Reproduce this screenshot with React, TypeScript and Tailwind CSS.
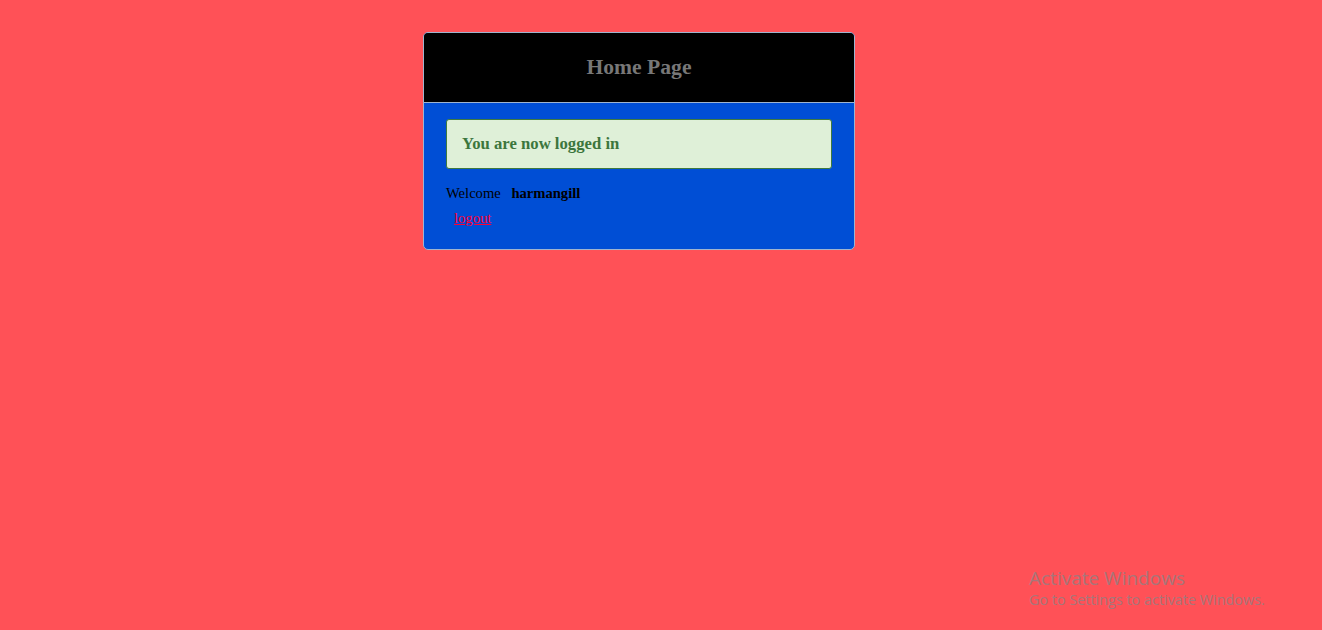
import React from 'react';

const App = () => {
    return (
        <div className="relative min-h-[630px] w-full bg-[#ff5157] font-['Liberation_Serif',serif]">
            <div className="pt-8 pl-[423px]">
                <div className="w-[432px] rounded-[5px] border border-[#9fb4cf] overflow-hidden bg-[#004ed5]">
                    <div className="h-[70px] bg-black border-b border-[#9fb4cf] flex items-center justify-center">
                        <h2 className="text-[21.6px] font-bold text-[#777777] leading-none">Home Page</h2>
                    </div>
                    <div className="px-[22px] pt-[16px] pb-[19px]">
                        <div className="h-[50px] rounded-[3px] border border-[#3f7a3f] bg-[#dff0d8] flex items-center pl-[15px]">
                            <p className="text-[16.7px] font-bold text-[#3c763d]">You are now logged in</p>
                        </div>
                        <p className="mt-[14px] text-[14.6px] text-black leading-[21px]">
                            Welcome <span className="ml-[7px] font-bold">harmangill</span>
                        </p>
                        <a href="#" className="inline-block mt-[4px] ml-[8px] text-[14.6px] text-[#ff0033] underline leading-[21px]">logout</a>
                    </div>
                </div>
            </div>

            <div className="absolute left-[1029px] top-[566px] font-['Open_Sans',sans-serif] text-[#a8767a]">
                <p className="text-[19px] leading-[24px]">Activate Windows</p>
                <p className="text-[14.4px] leading-[20px]">Go to Settings to activate Windows.</p>
            </div>
        </div>
    );
};

export default App;
